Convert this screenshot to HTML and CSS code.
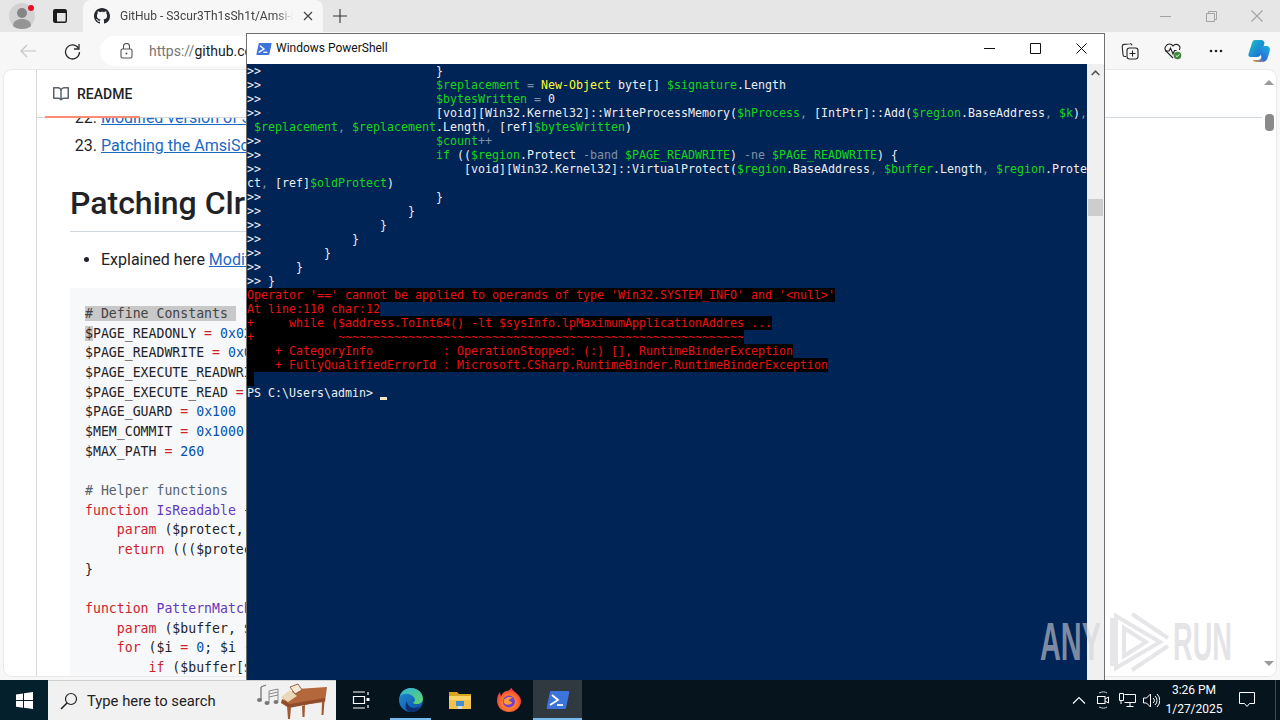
FILE: index.html
```html
<!DOCTYPE html>
<html lang="en">

<head>
    <meta charset="UTF-8">
    <title>Windows PowerShell</title>
    <link rel="stylesheet" href="styles.css">
</head>

<body>
    <div class="browser">
        <!-- tabs -->
        <div class="tabstrip">
            <div class="profile">
                <svg width="30" height="30" viewBox="0 0 30 30">
                    <circle cx="15" cy="15" r="13" fill="#d2d2d2" />
                    <circle cx="15" cy="12" r="5" fill="#858585" />
                    <path d="M6 25c0-5 4-7 9-7s9 2 9 7c-2 2-5 3-9 3s-7-1-9-3z" fill="#959595" />
                    <circle cx="24" cy="7" r="3" fill="#e81123" />
                </svg>
            </div>
            <div class="vtabs">
                <svg width="16" height="16" viewBox="0 0 16 16">
                    <rect x="1.7" y="1.7" width="12.6" height="12.6" rx="1.5" fill="none" stroke="#1c1c1c" stroke-width="1.4" />
                    <path d="M2 2h12v3H5v9H2z" fill="#1c1c1c" />
                </svg>
            </div>
            <div class="tab">
                <svg class="tab-logo" width="16" height="16" viewBox="0 0 16 16">
                    <path fill="#24292f" d="M8 0C3.58 0 0 3.58 0 8c0 3.54 2.29 6.53 5.47 7.59.4.07.55-.17.55-.38 0-.19-.01-.82-.01-1.49-2.01.37-2.53-.49-2.69-.94-.09-.23-.48-.94-.82-1.13-.28-.15-.68-.52-.01-.53.63-.01 1.08.58 1.23.82.72 1.21 1.87.87 2.33.66.07-.52.28-.87.51-1.07-1.78-.2-3.64-.89-3.64-3.95 0-.87.31-1.59.82-2.15-.08-.2-.36-1.02.08-2.12 0 0 .67-.21 2.2.82.64-.18 1.32-.27 2-.27.68 0 1.36.09 2 .27 1.53-1.04 2.2-.82 2.2-.82.44 1.1.16 1.92.08 2.12.51.56.82 1.27.82 2.15 0 3.07-1.87 3.75-3.65 3.95.29.25.54.73.54 1.48 0 1.07-.01 1.93-.01 2.2 0 .21.15.46.55.38A8.013 8.013 0 0016 8c0-4.42-3.58-8-8-8z" />
                </svg>
                <span class="tab-title">GitHub - S3cur3Th1sSh1t/Amsi-Bypass-Powershell</span>
                <svg class="tab-close" width="10" height="10" viewBox="0 0 10 10">
                    <path d="M1 1l8 8M9 1l-8 8" stroke="#444" stroke-width="1.2" />
                </svg>
            </div>
            <div class="newtab">
                <svg width="14" height="14" viewBox="0 0 14 14">
                    <path d="M7 0v14M0 7h14" stroke="#333" stroke-width="1.1" />
                </svg>
            </div>
            <div class="winbtns">
                <div class="winbtn">
                    <svg width="11" height="11" viewBox="0 0 11 11"><path d="M0 5.5h11" stroke="#a3a3a3" /></svg>
                </div>
                <div class="winbtn">
                    <svg width="11" height="11" viewBox="0 0 11 11">
                        <path d="M.5 2.5h8v8h-8zM2.5 2.5V.5h8v8h-2" fill="none" stroke="#a3a3a3" />
                    </svg>
                </div>
                <div class="winbtn">
                    <svg width="12" height="12" viewBox="0 0 12 12"><path d="M.5.5l11 11M11.5.5l-11 11" stroke="#a3a3a3" stroke-width="1.1" /></svg>
                </div>
            </div>
        </div>

        <!-- address bar -->
        <div class="toolbar">
            <div class="toolbtn">
                <svg width="16" height="14" viewBox="0 0 16 14"><path d="M16 7H1M7 1L1 7l6 6" fill="none" stroke="#c4c4c4" stroke-width="1.2" /></svg>
            </div>
            <div class="toolbtn">
                <svg width="17" height="17" viewBox="0 0 17 17">
                    <path d="M14.6 5.5A7 7 0 1 0 15.5 9" fill="none" stroke="#2b2b2b" stroke-width="1.3" />
                    <path d="M15 1v5h-5" fill="none" stroke="#2b2b2b" stroke-width="1.3" />
                </svg>
            </div>
            <div class="address">
                <svg class="lock" width="13" height="16" viewBox="0 0 13 16">
                    <rect x="1" y="6" width="11" height="9" rx="1.5" fill="none" stroke="#555" stroke-width="1.1" />
                    <path d="M3.5 6V3.5a3 3 0 0 1 6 0V6" fill="none" stroke="#555" stroke-width="1.1" />
                    <circle cx="6.5" cy="10.5" r="1" fill="#555" />
                </svg>
                <span class="url"><span class="url-scheme">https://</span>github.com/S3cur3Th1sSh1t/Amsi-Bypass-Powershell</span>
            </div>
            <div class="toolbtn-r">
                <svg width="18" height="18" viewBox="0 0 18 18">
                    <path d="M5 14.5H3.8a1.8 1.8 0 0 1-1.8-1.7L1.2 4.5A2 2 0 0 1 3 2.4l6-.6a1.8 1.8 0 0 1 2 1.5" fill="none" stroke="#222" stroke-width="1.1" />
                    <rect x="6" y="6" width="11" height="11" rx="2.5" fill="#f7f7f7" stroke="#222" stroke-width="1.1" />
                    <path d="M11.5 8.5v6M8.5 11.5h6" stroke="#222" stroke-width="1.1" />
                </svg>
            </div>
            <div class="toolbtn-r">
                <svg width="18" height="18" viewBox="0 0 18 18">
                    <path d="M9 16L2.5 9.5A4 4 0 0 1 2 4a4 4 0 0 1 7 0 4 4 0 0 1 7 1c0 1-.2 2-.7 3" fill="none" stroke="#222" stroke-width="1.1" />
                    <path d="M1 9h4l1.5-3 2.5 6 1.500-3.500h2" fill="none" stroke="#222" stroke-width="1.1" />
                    <circle cx="13.500" cy="13.500" r="3.800" fill="#3f8a3f" />
                    <path d="M11.800 13.500l1.200 1.200 2.200-2.200" fill="none" stroke="#fff" />
                </svg>
            </div>
            <div class="toolbtn-r">
                <svg width="14" height="4" viewBox="0 0 14 4">
                    <circle cx="2" cy="2" r="1.300" fill="#222" />
                    <circle cx="7" cy="2" r="1.300" fill="#222" />
                    <circle cx="12" cy="2" r="1.300" fill="#222" />
                </svg>
            </div>
            <div class="toolbtn-r">
                <svg width="24" height="24" viewBox="0 0 24 24">
                    <defs>
                        <linearGradient id="copA" x1="0" y1="0" x2="1" y2="1">
                            <stop offset="0" stop-color="#1cc5c9" />
                            <stop offset="1" stop-color="#1a62d8" />
                        </linearGradient>
                        <linearGradient id="copB" x1="0" y1="1" x2="1" y2="0">
                            <stop offset="0" stop-color="#f2a23c" />
                            <stop offset=".4" stop-color="#2b6fe0" />
                            <stop offset="1" stop-color="#14b6d6" />
                        </linearGradient>
                    </defs>
                    <path d="M8 1h6c2 0 3 1 3.500 3L14 15c-.5 2-2 3-4 3H4c-2 0-3-1-2.500-3L5 4c.5-2 1.500-3 3-3z" fill="url(#copA)" />
                    <path d="M11 7h8c3 0 4.500 2 3.800 4.500L21 18c-.7 3-3 5-6 5H9c-2 0-3-1-3-2h5c2 0 3-1 3.500-3z" fill="url(#copB)" />
                </svg>
            </div>
        </div>

        <!-- page -->
        <div class="page">
            <div class="gutter"></div>
            <div class="readme">
                <div class="readme-head">
                    <div class="readme-tab">
                        <svg width="16" height="16" viewBox="0 0 16 16">
                            <path fill="#59636e" d="M0 1.750A.750.750 0 0 1 .750 1h4.253c1.227 0 2.317.590 3 1.501A3.743 3.743 0 0 1 11.006 1h4.245a.750.750 0 0 1 .750.750v10.500a.750.750 0 0 1-.750.750h-4.507a2.250 2.250 0 0 0-1.591.659l-.622.621a.750.750 0 0 1-1.060 0l-.622-.621A2.250 2.250 0 0 0 5.258 13H.750a.750.750 0 0 1-.750-.750Zm7.251 10.324.004-5.073-.002-2.253A2.250 2.250 0 0 0 5.003 2.500H1.500v9h3.757a3.750 3.750 0 0 1 1.994.574ZM8.755 4.750l-.004 7.322a3.752 3.752 0 0 1 1.992-.572H14.500v-9h-3.495a2.250 2.250 0 0 0-2.250 2.250Z" />
                        </svg>
                        <span>README</span>
                    </div>
                </div>
                <div class="markdown">
                    <ol class="toc" start="22">
                        <li><a href="#">Modified version of SharpBlock</a></li>
                        <li><a href="#">Patching the AmsiScanBuffer</a></li>
                    </ol>
                    <h2>Patching ClrMd</h2>
                    <ul>
                        <li>Explained here <a href="#">Modified Amsi ScanBuffer Patch</a></li>
                    </ul>
<pre class="code"><span class="sel"># Define Constants </span>
<span class="sel2">$</span>PAGE_READONLY <span class="k">=</span> <span class="n">0x02</span>
$PAGE_READWRITE <span class="k">=</span> <span class="n">0x04</span>
$PAGE_EXECUTE_READWRITE <span class="k">=</span> <span class="n">0x40</span>
$PAGE_EXECUTE_READ <span class="k">=</span> <span class="n">0x20</span>
$PAGE_GUARD <span class="k">=</span> <span class="n">0x100</span>
$MEM_COMMIT <span class="k">=</span> <span class="n">0x1000</span>
$MAX_PATH <span class="k">=</span> <span class="n">260</span>

<span class="c"># Helper functions</span>
<span class="k">function</span> <span class="f">IsReadable</span> {
    <span class="k">param</span> ($protect, $state)
    <span class="k">return</span> ((($protect <span class="k">-band</span> $PAGE_READONLY)))
}

<span class="k">function</span> <span class="f">PatternMatch</span> {
    <span class="k">param</span> ($buffer, $signature, $index)
    <span class="k">for</span> ($i <span class="k">=</span> <span class="n">0</span>; $i <span class="k">-lt</span> $signature.Length; $i++) {
        <span class="k">if</span> ($buffer[$index + $i] <span class="k">-ne</span> $signature[$i]) {</pre>
                </div>
            </div>
            <div class="pagescroll">
                <div class="arrow-up"></div>
                <div class="pagethumb"></div>
                <div class="arrow-down"></div>
            </div>
        </div>
    </div>

    <!-- taskbar -->
    <div class="taskbar">
        <div class="start">
            <svg width="17" height="17" viewBox="0 0 17 17">
                <path fill="#fff" d="M0 2.400l7-1v6.700H0zM8 1.300L17 0v8.100H8zM0 9h7v6.700l-7-1zM8 9h9v8l-9-1.300z" />
            </svg>
        </div>
        <div class="search">
            <svg class="search-glass" width="18" height="18" viewBox="0 0 18 18">
                <circle cx="11" cy="7" r="5.500" fill="none" stroke="#222" stroke-width="1.200" />
                <path d="M7 11l-6 6" stroke="#222" stroke-width="1.600" />
            </svg>
            <span class="search-text">Type here to search</span>
            <svg class="search-art" width="72" height="38" viewBox="0 0 72 38">
                <path d="M5 5v13M5 5l5-2" fill="none" stroke="#777" stroke-width="1.300" />
                <ellipse cx="3.500" cy="18" rx="2.500" ry="2" fill="#777" />
                <path d="M13 9l9-2v12M13 9v12M13 12l9-2M13 15l9-2" fill="none" stroke="#8a8a8a" />
                <ellipse cx="11" cy="21" rx="2.500" ry="2" fill="#777" />
                <ellipse cx="20" cy="20" rx="2.500" ry="2" fill="#777" />
                <path d="M26 15l15-8 30-2-2 15-30 4-9-3z" fill="#b5673c" />
                <path d="M25 15l9-7 7 6-9 6z" fill="#e9d9b8" />
                <path d="M34 5l8-3 4 6-7 4z" fill="#f5e8d0" stroke="#7a4526" stroke-width=".8" />
                <path d="M26 17l6 4 2 1 35-6v3l-36 7-8-5z" fill="#8f4d2b" />
                <path d="M31 24l1 13h2l1-12zM46 24l.5 11h2l.5-12zM66 20l-.5 13h2l1-14z" fill="#a05a33" />
            </svg>
        </div>
        <div class="task task-view">
            <svg width="18" height="18" viewBox="0 0 18 18">
                <path d="M1 1h12M1 17h12M1.500 5.500h11v7h-11z" fill="none" stroke="#fff" stroke-width="1.200" />
                <path d="M16 1v3M16 14v3" stroke="#fff" stroke-width="1.200" />
                <rect x="14.500" y="7" width="3" height="3" fill="#fff" />
            </svg>
        </div>
        <div class="task task-open">
            <svg width="26" height="26" viewBox="0 0 26 26">
                <defs>
                    <linearGradient id="edgeA" x1="0" y1="0" x2="1" y2="1">
                        <stop offset="0" stop-color="#1f8ed8" />
                        <stop offset="1" stop-color="#0c4f9e" />
                    </linearGradient>
                    <linearGradient id="edgeB" x1="0" y1="0" x2="1" y2="1">
                        <stop offset="0" stop-color="#2fb3d8" />
                        <stop offset="1" stop-color="#63d46a" />
                    </linearGradient>
                </defs>
                <circle cx="13" cy="13" r="12" fill="url(#edgeA)" />
                <path d="M2 9C4 3 9 1 13 1c7 0 12 5 12 11 0 3-3 5-6 5-2 0-4-.5-4-1.500 2-1 2.500-2.500 1.500-4.500C14 7 7 5 2 9z" fill="url(#edgeB)" />
                <path d="M9 14c0 4 3 7 7 7 3 0 5-1 6-2-2 4-5 6-9 6-5 0-7-6-4-11z" fill="#0b2f6e" />
            </svg>
        </div>
        <div class="task">
            <svg width="24" height="20" viewBox="0 0 24 20">
                <path d="M1 2h8l2 2h12v15H1z" fill="#d9a520" />
                <path d="M1 6h22v4H1z" fill="#fbd467" />
                <path d="M1 10h22v9H1z" fill="#f2c24c" />
                <path d="M8 11h8v5H8z" fill="#3f8fd0" />
                <path d="M10 16h4v3h-4z" fill="#c9ddf0" />
            </svg>
        </div>
        <div class="task">
            <svg width="24" height="24" viewBox="0 0 24 24">
                <defs>
                    <radialGradient id="foxA" cx=".5" cy=".6" r=".6">
                        <stop offset="0" stop-color="#ffb03a" />
                        <stop offset=".6" stop-color="#ff6a2b" />
                        <stop offset="1" stop-color="#e3284f" />
                    </radialGradient>
                </defs>
                <path d="M12 24C5 24 0 19 0 12.500 0 9 1 6 3 4c0 2 .5 3 1.500 4C5 5 8 3 10 3c4-1 3-3 5-3 0 2 1 2 3 4 4 3 6 6 6 9 0 6-5 11-12 11z" fill="url(#foxA)" />
                <circle cx="12" cy="13.500" r="6" fill="#7442c8" />
                <path d="M7 12c2-3 6-4 9-2-2 0-4 1-4 3 2 0 3 1 3 2-2 2-5 2-7 1-1-1-1.500-2.500-1-4z" fill="#ff9a3c" />
            </svg>
        </div>
        <div class="task task-active">
            <svg width="24" height="20" viewBox="0 0 24 20">
                <path d="M5 1h17c1 0 1.500.7 1.300 1.500L20 18c-.2.700-.8 1-1.500 1H2C1 19 .5 18.300.7 17.500L4 2c.2-.6.500-1 1-1z" fill="#3d74dc" />
                <path d="M6 5l6 5-8 5" fill="none" stroke="#fff" stroke-width="1.700" />
                <path d="M11 15h6" stroke="#fff" stroke-width="1.700" />
            </svg>
        </div>
        <div class="tray">
            <div class="tray-icon">
                <svg width="14" height="8" viewBox="0 0 14 8"><path d="M1 7.500l6-6 6 6" fill="none" stroke="#fff" stroke-width="1.100" /></svg>
            </div>
            <div class="tray-icon">
                <svg width="14" height="18" viewBox="0 0 14 18">
                    <path d="M3 2c3-1.500 6-1.500 8 0M3 16c3 1.500 6 1.500 8 0" fill="none" stroke="#ccc" />
                    <rect x="1.500" y="5.500" width="7.500" height="7" fill="none" stroke="#fff" />
                    <path d="M9 8l3.500-2v6L9 10" fill="none" stroke="#fff" />
                </svg>
            </div>
            <div class="tray-icon">
                <svg width="17" height="14" viewBox="0 0 17 14">
                    <path d="M5.500 1.500h11v8h-11M.5.500h4v7h-4zM2 8v3M11 9.500v4M7.500 13.500h7" fill="none" stroke="#fff" />
                </svg>
            </div>
            <div class="tray-icon">
                <svg width="17" height="15" viewBox="0 0 17 15">
                    <path d="M.5 5h3l4-4v13l-4-4h-3z" fill="none" stroke="#fff" />
                    <path d="M10 5a3 3 0 0 1 0 5M12 3a6 6 0 0 1 0 9M14 1a9 9 0 0 1 0 13" fill="none" stroke="#fff" />
                </svg>
            </div>
            <div class="clock">
                <span>3:26 PM</span>
                <span>1/27/2025</span>
            </div>
            <div class="notify">
                <svg width="16" height="16" viewBox="0 0 16 16">
                    <path d="M.5.500h15v11h-5l-2.500 3-2.500-3h-5z" fill="none" stroke="#fff" />
                </svg>
            </div>
            <div class="show-desktop"></div>
        </div>
    </div>

    <!-- powershell window, over the browser -->
    <div class="ps-window">
        <div class="ps-title">
            <svg class="ps-icon" width="16" height="14" viewBox="0 0 24 20">
                <path d="M5 1h17c1 0 1.500.7 1.300 1.500L20 18c-.2.700-.8 1-1.500 1H2C1 19 .5 18.300.7 17.500L4 2c.2-.6.500-1 1-1z" fill="#3d74dc" />
                <path d="M6 5l6 5-8 5" fill="none" stroke="#fff" stroke-width="2" />
                <path d="M11 15h6" stroke="#fff" stroke-width="2" />
            </svg>
            <span class="ps-name">Windows PowerShell</span>
            <div class="ps-btns">
                <div class="ps-btn">
                    <svg width="11" height="11" viewBox="0 0 11 11"><path d="M0 5.500h11" stroke="#111" /></svg>
                </div>
                <div class="ps-btn">
                    <svg width="11" height="11" viewBox="0 0 11 11"><path d="M.5.500h10v10H.5z" fill="none" stroke="#111" /></svg>
                </div>
                <div class="ps-btn">
                    <svg width="11" height="11" viewBox="0 0 11 11"><path d="M.5.500l10 10M10.500.500l-10 10" stroke="#111" /></svg>
                </div>
            </div>
        </div>
        <div class="ps-body">
<pre class="console">&gt;&gt;                         }
&gt;&gt;                         <span class="v">$replacement</span> <span class="o">=</span> <span class="y">New-Object</span> byte[] <span class="v">$signature</span>.Length
&gt;&gt;                         <span class="v">$bytesWritten</span> <span class="o">=</span> 0
&gt;&gt;                         [void][Win32.Kernel32]::WriteProcessMemory(<span class="v">$hProcess</span><span class="o">,</span> [IntPtr]::Add(<span class="v">$region</span>.BaseAddress<span class="o">,</span> <span class="v">$k</span>)<span class="o">,</span>
 <span class="v">$replacement</span><span class="o">,</span> <span class="v">$replacement</span>.Length<span class="o">,</span> [ref]<span class="v">$bytesWritten</span>)
&gt;&gt;                         <span class="v">$count</span><span class="o">++</span>
&gt;&gt;                         <span class="v">if</span> ((<span class="v">$region</span>.Protect <span class="o">-band</span> <span class="v">$PAGE_READWRITE</span>) <span class="o">-ne</span> <span class="v">$PAGE_READWRITE</span>) {
&gt;&gt;                             [void][Win32.Kernel32]::VirtualProtect(<span class="v">$region</span>.BaseAddress<span class="o">,</span> <span class="v">$buffer</span>.Length<span class="o">,</span> <span class="v">$region</span>.Prote
ct<span class="o">,</span> [ref]<span class="v">$oldProtect</span>)
&gt;&gt;                         }
&gt;&gt;                     }
&gt;&gt;                 }
&gt;&gt;             }
&gt;&gt;         }
&gt;&gt;     }
&gt;&gt; }
<span class="err">Operator '==' cannot be applied to operands of type 'Win32.SYSTEM_INFO' and '&lt;null&gt;'</span>
<span class="err">At line:110 char:12</span>
<span class="err">+     while ($address.ToInt64() -lt $sysInfo.lpMaximumApplicationAddres ...</span>
<span class="err">+            ~~~~~~~~~~~~~~~~~~~~~~~~~~~~~~~~~~~~~~~~~~~~~~~~~~~~~~~~~~</span>
<span class="err">    + CategoryInfo          : OperationStopped: (:) [], RuntimeBinderException</span>
<span class="err">    + FullyQualifiedErrorId : Microsoft.CSharp.RuntimeBinder.RuntimeBinderException</span>
<span class="err"> </span>
PS C:\Users\admin&gt; <span class="cursor"></span></pre>
            <div class="ps-scroll">
                <svg class="ps-up" width="9" height="6" viewBox="0 0 9 6"><path d="M.7 5L4.500 1.200 8.300 5" fill="none" stroke="#555" stroke-width="1.600" /></svg>
                <div class="ps-thumb"></div>
            </div>
        </div>
    </div>

    <!-- watermark -->
    <svg class="watermark" width="200" height="64" viewBox="0 0 200 64">
        <text x="0" y="50" textLength="61" lengthAdjust="spacingAndGlyphs" class="wm-text">ANY</text>
        <path d="M72 8v48M76 6l44 26-44 26zM84 18l22 14-22 14zM92 4l36 24M92 60l36-24" fill="none" stroke="#d2d2d7" stroke-opacity=".55" stroke-width="4" />
        <text x="133" y="50" textLength="59" lengthAdjust="spacingAndGlyphs" class="wm-text">RUN</text>
    </svg>
</body>

</html>
```

FILE: styles.css
```css
* {
    box-sizing: border-box;
}

html,
body {
    margin: 0;
    height: 720px;
    overflow: hidden;
}

body {
    display: flex;
    flex-direction: column;
    font-family: Roboto, "Liberation Sans", sans-serif;
    background-color: #f7f7f7;
}

.browser {
    height: 680px;
    display: flex;
    flex-direction: column;
    background-color: #f7f7f7;
}

/* tabs */
.tabstrip {
    height: 32px;
    display: flex;
    align-items: center;
    background-color: #e6e6e6;
}

.profile {
    width: 44px;
    display: flex;
    justify-content: center;
}

.vtabs {
    width: 32px;
    display: flex;
    justify-content: center;
    margin-right: 7px;
}

.tab {
    width: 240px;
    height: 32px;
    padding: 0 10px 0 11px;
    display: flex;
    align-items: center;
    background-color: #f7f7f7;
    border-radius: 8px 8px 0 0;
}

.tab-logo {
    flex: none;
    margin-right: 10px;
}

.tab-title {
    width: 173px;
    font-size: 12px;
    color: #444;
    white-space: nowrap;
    overflow: hidden;
    -webkit-mask-image: linear-gradient(to right, #000 90%, transparent);
    mask-image: linear-gradient(to right, #000 90%, transparent);
}

.tab-close {
    flex: none;
    margin-left: 10px;
}

.newtab {
    width: 34px;
    display: flex;
    justify-content: center;
}

.winbtns {
    margin-left: auto;
    display: flex;
}

.winbtn {
    width: 46px;
    height: 32px;
    display: flex;
    align-items: center;
    justify-content: center;
}

/* address bar */
.toolbar {
    height: 38px;
    padding-left: 6px;
    display: flex;
    align-items: center;
}

.toolbtn {
    width: 44px;
    display: flex;
    justify-content: center;
}

.toolbtn-r {
    width: 43px;
    height: 32px;
    display: flex;
    align-items: center;
    justify-content: center;
}

.address {
    flex: 1;
    height: 30px;
    margin: 0 5px 0 6px;
    padding-left: 20px;
    display: flex;
    align-items: center;
    background-color: #fff;
    border-radius: 15px;
}

.lock {
    margin-right: 16px;
}

.url {
    font-size: 14px;
    color: #1b1b1b;
    white-space: nowrap;
}

.url-scheme {
    color: #767676;
}

/* page */
.page {
    flex: 1;
    min-height: 0;
    margin: 0 4px 4px;
    display: flex;
    background-color: #fff;
    border-radius: 8px;
    box-shadow: 0 0 0 1px #e9e9e9;
    overflow: hidden;
}

.gutter {
    width: 33px;
    flex: none;
    border-right: 1px solid #d9d9d9;
}

.readme {
    flex: 1;
    min-width: 0;
    display: flex;
    flex-direction: column;
}

.readme-head {
    flex: none;
    height: 48px;
    padding-left: 8px;
    border-bottom: 1px solid #d1d9e0;
    background-color: #fff;
}

.readme-tab {
    width: 95px;
    height: 48px;
    padding: 2px 0 0 8px;
    display: flex;
    align-items: center;
    gap: 8px;
    font-size: 14px;
    font-weight: 500;
    color: #1f2328;
    border-bottom: 2px solid #fd8c73;
}

.markdown {
    flex: 1;
    min-height: 0;
    padding: 0 240px 0 33px;
    overflow: hidden;
    font-size: 16px;
    line-height: 24px;
    color: #1f2328;
}

.markdown a {
    color: #1b69c4;
    text-decoration: underline;
}

.toc {
    margin: -12px 0 0;
    padding-left: 31px;
}

.toc li+li {
    margin-top: 4px;
}

.markdown h2 {
    margin: 25px 0 16px;
    padding-bottom: 8px;
    font-size: 32px;
    line-height: 40px;
    font-weight: 500;
    border-bottom: 1px solid #d1d9e0;
}

.markdown ul {
    margin: 0 0 16px;
    padding-left: 31px;
}

.code {
    margin: 0;
    padding: 16px 15px;
    height: 500px;
    font-family: "DejaVu Sans Mono", monospace;
    font-size: 13.200px;
    line-height: 19.650px;
    color: #1f2328;
    background-color: #f6f8fa;
    overflow: hidden;
}

.code .c {
    color: #59636e;
}

.code .k {
    color: #cf222e;
}

.code .n {
    color: #0550ae;
}

.code .f {
    color: #6639ba;
}

.sel {
    background-color: #c8c8c8;
    color: #444;
}

.sel2 {
    background-color: #c8c8c8;
}

.pagescroll {
    width: 14px;
    flex: none;
    padding: 10px 0 10px;
    display: flex;
    flex-direction: column;
    align-items: center;
}

.arrow-up {
    width: 0;
    height: 0;
    border: 5px solid transparent;
    border-top: 0;
    border-bottom: 5px solid #9a9a9a;
}

.pagethumb {
    width: 9px;
    height: 17px;
    margin-top: 29px;
    background-color: #8a8a8a;
    border-radius: 4px;
}

.arrow-down {
    width: 0;
    height: 0;
    margin-top: auto;
    border: 5px solid transparent;
    border-bottom: 0;
    border-top: 5px solid #9a9a9a;
}

/* taskbar */
.taskbar {
    height: 40px;
    display: flex;
    align-items: center;
    background-color: #06141e;
    color: #fff;
}

.start {
    width: 48px;
    height: 40px;
    display: flex;
    align-items: center;
    justify-content: center;
    background-color: #03202c;
}

.search {
    width: 288px;
    height: 40px;
    padding-left: 12px;
    display: flex;
    align-items: center;
    background-color: #f1f1f1;
    border-top: 1px solid #cfcfcf;
    color: #222;
}

.search-glass {
    flex: none;
}

.search-text {
    margin-left: 9px;
    font-size: 14.800px;
    white-space: nowrap;
}

.search-art {
    margin-left: auto;
    margin-right: 8px;
    flex: none;
}

.task {
    width: 49px;
    height: 40px;
    display: flex;
    align-items: center;
    justify-content: center;
}

.task-view {
    width: 50px;
}

.task-open {
    box-shadow: inset 0 -2px 0 0 #76b9ed;
    clip-path: inset(0 4px);
}

.task-active {
    background-color: #30393f;
    box-shadow: inset 0 -2px 0 0 #76b9ed;
}

.tray {
    margin-left: auto;
    display: flex;
    align-items: center;
}

.tray-icon {
    width: 24px;
    display: flex;
    justify-content: center;
}

.clock {
    width: 62px;
    display: flex;
    flex-direction: column;
    align-items: center;
    font-size: 12px;
    line-height: 19px;
}

.notify {
    width: 44px;
    display: flex;
    justify-content: center;
}

.show-desktop {
    width: 5px;
    height: 40px;
    margin-left: 6px;
    border-left: 1px solid #3c4850;
}

/* powershell window */
.ps-window {
    position: absolute;
    left: 246px;
    top: 33px;
    width: 859px;
    height: 647px;
    display: flex;
    flex-direction: column;
    border: 1px solid #707070;
    border-bottom: 0;
    background-color: #fff;
}

.ps-title {
    flex: none;
    height: 30px;
    padding-left: 9px;
    display: flex;
    align-items: center;
}

.ps-icon {
    margin-right: 4px;
}

.ps-name {
    font-size: 12px;
    color: #111;
    padding-bottom: 2px;
}

.ps-btns {
    margin-left: auto;
    display: flex;
}

.ps-btn {
    width: 46px;
    height: 30px;
    padding-bottom: 2px;
    display: flex;
    align-items: center;
    justify-content: center;
}

.ps-body {
    flex: 1;
    min-height: 0;
    display: flex;
}

.console {
    width: 840px;
    flex: none;
    margin: 0;
    background-color: #012456;
    color: #eeedf0;
    font-family: "DejaVu Sans Mono", monospace;
    font-size: 11.630px;
    line-height: 14px;
    overflow: hidden;
}

.console .v {
    color: #17d617;
}

.console .o {
    color: #8090a8;
}

.console .y {
    color: #ffff30;
}

.console .err {
    display: inline-block;
    height: 14px;
    background-color: #000;
    color: #ee1111;
    vertical-align: top;
}

.cursor {
    display: inline-block;
    width: 7px;
    height: 3px;
    vertical-align: -3px;
    background-color: #f5e3c8;
}

.ps-scroll {
    flex: 1;
    display: flex;
    flex-direction: column;
    align-items: center;
    background-color: #f0f0f0;
}

.ps-up {
    margin-top: 6px;
}

.ps-thumb {
    width: 15px;
    height: 17px;
    margin-top: 123px;
    background-color: #cdcdcd;
}

/* watermark */
.watermark {
    position: absolute;
    left: 1040px;
    top: 610px;
}

.wm-text {
    font-family: "Liberation Sans", sans-serif;
    font-size: 54px;
    font-weight: 700;
    fill: #d2d2d7;
    fill-opacity: .6;
}
```
